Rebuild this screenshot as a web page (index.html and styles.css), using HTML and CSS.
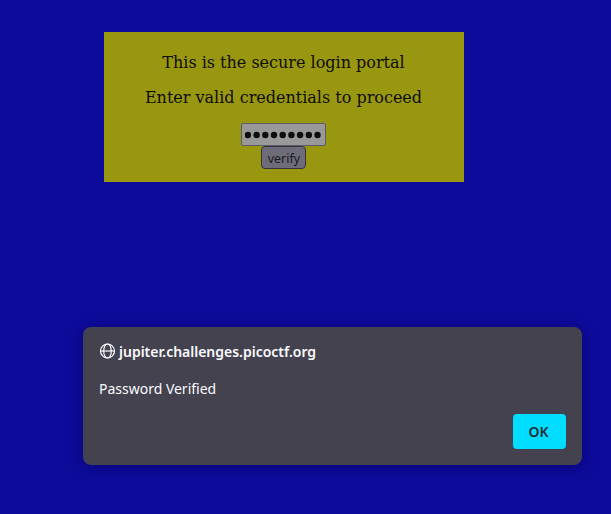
FILE: index.html
```html
<!DOCTYPE html>
<html lang="en">
<head>
<meta charset="utf-8">
<title>Secure login portal</title>
<link rel="stylesheet" href="styles.css">
</head>
<body>
<main class="portal">
  <p class="intro">This is the secure login portal</p>
  <p class="hint">Enter valid credentials to proceed</p>
  <form class="login">
    <div class="password">
      <svg class="dots" viewBox="0 0 78 8" fill="currentColor">
        <circle cx="2.9" cy="4" r="3.2"/>
        <circle cx="11.6" cy="4" r="3.2"/>
        <circle cx="20.3" cy="4" r="3.2"/>
        <circle cx="29" cy="4" r="3.2"/>
        <circle cx="37.7" cy="4" r="3.2"/>
        <circle cx="46.4" cy="4" r="3.2"/>
        <circle cx="55.1" cy="4" r="3.2"/>
        <circle cx="63.8" cy="4" r="3.2"/>
        <circle cx="72.5" cy="4" r="3.2"/>
      </svg>
    </div>
    <button class="verify" type="button"><span class="label">verify</span></button>
  </form>
</main>
<section class="dialog" role="dialog">
  <header class="origin">
    <svg class="globe" viewBox="0 0 16 16" fill="none" stroke="currentColor" stroke-width="1.2">
      <circle cx="8" cy="8" r="7"/>
      <ellipse cx="8" cy="8" rx="3.8" ry="7"/>
      <path d="M1 8h14"/>
    </svg>
    <span class="host">jupiter.challenges.picoctf.org</span>
  </header>
  <p class="message">Password Verified</p>
  <button class="ok" type="button"><span class="label">OK</span></button>
</section>
</body>
</html>
```
FILE: styles.css
```css
* { box-sizing: border-box; }
body {
  margin: 0;
  height: 514px;
  overflow: hidden;
  background: #0d0b9a;
}
p { margin: 0; }
.portal {
  width: 360px;
  height: 150px;
  margin: 32px 0 0 104px;
  padding: 21px 1px 0 0;
  background: #99970f;
  color: #0d0d0d;
  font: 16px/19px "DejaVu Serif", serif;
  text-align: center;
}
.intro, .hint { margin-bottom: 16px; white-space: nowrap; }
.login {
  display: flex;
  flex-direction: column;
  align-items: center;
}
.password {
  display: flex;
  align-items: center;
  width: 85px;
  height: 23px;
  padding: 1px 0 0 3px;
  border: 1px solid #5b5b67;
  border-radius: 2px;
  background: #999;
}
.dots { width: 78px; height: 8px; }
.label { display: inline-block; transform: scaleX(.954); }
.verify {
  width: 45px;
  height: 23px;
  padding: 1px 0 0;
  border: 1px solid #35343f;
  border-radius: 4px;
  background: #6e6c78;
  color: #19191f;
  font: 13px/20px "Noto Sans", sans-serif;
}
.dialog {
  display: flex;
  flex-direction: column;
  width: 499px;
  height: 138px;
  margin: 145px 0 0 83px;
  padding: 14px 16px 16px;
  border-radius: 8px;
  background: #44424e;
  box-shadow: 0 2px 14px rgba(8, 6, 90, .55);
  color: #fbfbfe;
  font: 14.67px/20px "Noto Sans", sans-serif;
}
.origin { display: flex; align-items: center; height: 20px; gap: 4px; }
.globe { width: 17px; height: 16px; }
.host, .message {
  transform: scaleX(.954);
  transform-origin: left;
  white-space: nowrap;
}
.host { margin-left: -1px; font-weight: 600; }
.message { margin: 17px 0 0 -.5px; }
.ok {
  align-self: flex-end;
  width: 53px;
  height: 35px;
  margin-top: auto;
  padding: 0 1px 1px 0;
  border: 0;
  border-radius: 4px;
  background: #00ddff;
  color: #2b2a33;
  font: 600 14.67px/20px "Noto Sans", sans-serif;
}
```
